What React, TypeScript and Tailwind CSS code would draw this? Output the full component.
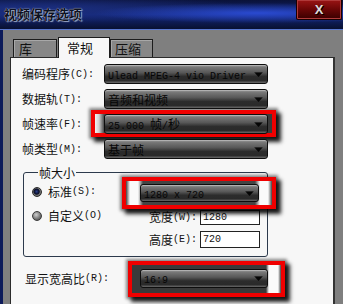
import React from "react";

// splits CJK runs from half-width ASCII runs, like a SimSun bitmap font would render them
function Mixed({ text }: { text: string }) {
  const parts = text.split(/([\x00-\x7F]+)/).filter(Boolean);
  return (
    <>
      {parts.map((p, i) =>
        /^[\x00-\x7F]+$/.test(p) ? (
          <span key={i} className="font-['Liberation_Mono',monospace] text-[10px] whitespace-pre">
            {p}
          </span>
        ) : (
          <span key={i} className="text-[12px]">
            {p}
          </span>
        )
      )}
    </>
  );
}

function Arrow() {
  return (
    <svg width="9" height="5" viewBox="0 0 9 5" className="shrink-0">
      <path d="M0 0h9L4.5 5z" fill="#050505" />
      <path d="M0 0h9" stroke="#777" strokeWidth="0.6" />
    </svg>
  );
}

function Dropdown({ text, className }: { text: string; className: string }) {
  return (
    <div
      className={
        "relative z-[1] flex items-center rounded-[3px] border border-[#0d0d0d] bg-[linear-gradient(180deg,#9c9c9c_0%,#767676_14%,#585858_42%,#2c2c2c_64%,#2a2a2a_86%,#6a6a6a_100%)] shadow-[inset_0_1px_0_#b0b0b0] pl-[3px] pr-[4px] text-[#060606] " +
        className
      }
    >
      <span className="flex-1 min-w-0 whitespace-nowrap overflow-hidden leading-[16px]">
        <Mixed text={text} />
      </span>
      <Arrow />
    </div>
  );
}

function RedBox({ className }: { className: string }) {
  return (
    <div
      className={
        "absolute border-[4px] border-[#f00000] shadow-[0_0_3px_2px_rgba(0,0,0,0.45),4px_4px_4px_1px_rgba(0,0,0,0.85)] " +
        className
      }
    />
  );
}

function Label({ text, className = "" }: { text: string; className?: string }) {
  return (
    <div className={"flex items-center shrink-0 text-[#111] " + className}>
      <Mixed text={text} />
    </div>
  );
}

function Radio({ on }: { on: boolean }) {
  return on ? (
    <span className="w-[10px] h-[10px] rounded-full shrink-0 border border-[#2a2a2a] bg-[radial-gradient(circle_at_45%_45%,#2a3f8a_0,#070b22_42%,#7a7a7a_58%,#3a3a3a_100%)]" />
  ) : (
    <span className="w-[10px] h-[10px] rounded-full shrink-0 border border-[#3a3a3a] bg-[radial-gradient(circle_at_40%_35%,#cfcfcf_0,#7a7a7a_55%,#3a3a3a_100%)]" />
  );
}

function Input({ value, className }: { value: string; className: string }) {
  return (
    <div className={"flex items-center bg-white border border-[#222] pl-[2px] text-[#111] " + className}>
      <Mixed text={value} />
    </div>
  );
}

export default function App() {
  return (
    <div className="w-[343px] h-[304px] overflow-hidden flex flex-col bg-[#0b1540] font-['Noto_Sans_CJK_SC',sans-serif]">
      {/* title bar */}
      <div className="h-[29px] shrink-0 flex items-start bg-[radial-gradient(ellipse_at_75%_45%,#2a4ad0_0%,transparent_45%),radial-gradient(ellipse_at_10%_30%,#1c2f80_0%,transparent_50%),linear-gradient(180deg,#0a1238_0%,#14287a_50%,#081030_100%)]">
        <div className="pl-[4px] pt-[5px] text-[13px] font-bold leading-[18px] text-[#0d1222] [text-shadow:0_0_1px_#e6ecf8,1px_1px_1px_#9aa6c0]">
          视频保存选项
        </div>
        <div className="ml-auto mr-[1px] w-[46px] h-[20px] flex items-center justify-center border border-[#1a0000] border-t-0 rounded-b-[2px] bg-[linear-gradient(180deg,#9a1414_0%,#6a0606_50%,#3a0000_100%)] shadow-[inset_0_0_0_1px_#b03a3a]">
          <span className="font-['Liberation_Sans',sans-serif] font-bold text-[13px] leading-none text-[#dcdcdc] [text-shadow:1px_1px_0_#000]">
            X
          </span>
        </div>
      </div>
      <div className="h-px shrink-0 bg-[#5a78d0]" />

      {/* body */}
      <div className="flex-1 flex">
        <div className="w-[3px] bg-[#0c1a5a]" />
        <div className="flex-1 flex flex-col bg-[#7f7f7f]">
          {/* tabs */}
          <div className="h-[27px] shrink-0 flex items-end pl-[10px]">
            <div className="w-[44px] h-[18px] flex items-center pl-[5px] bg-[#878787] border border-b-0 border-[#1c1c1c] shadow-[inset_1px_1px_0_#a8a8a8] text-[13px] text-[#111]">
              库
            </div>
            <div className="relative z-[2] ml-px w-[52px] h-[21px] -mb-px flex items-center pl-[8px] bg-[#f7f7f7] border border-b-0 border-[#1c1c1c] text-[13px] text-[#111]">
              常规
            </div>
            <div className="w-[43px] h-[18px] flex items-center pl-[4px] bg-[#878787] border border-b-0 border-[#1c1c1c] shadow-[inset_1px_1px_0_#a8a8a8] text-[13px] text-[#111]">
              压缩
            </div>
          </div>

          {/* panel */}
          <div className="ml-[7px] w-[325px] flex-1 bg-[#f7f7f7] border border-b-0 border-[#2b2b2b] border-r-[2px] border-r-[#333] pl-[11px] pt-[6px] flex flex-col">
            <div className="flex flex-col gap-[5px]">
              <div className="flex h-[20px]">
                <Label text="编码程序(C):" className="w-[82px]" />
                <Dropdown text="Ulead MPEG-4 vio Driver" className="w-[164px] h-[20px]" />
              </div>
              <div className="flex h-[20px]">
                <Label text="数据轨(T):" className="w-[82px]" />
                <Dropdown text="音频和视频" className="w-[164px] h-[20px]" />
              </div>
              <div className="flex h-[20px]">
                <Label text="帧速率(F):" className="w-[82px]" />
                <div className="relative">
                  <RedBox className="-left-[13px] -right-[8px] -top-[4px] -bottom-[3px] bg-[linear-gradient(90deg,#f2f2f2_0px,#cfcfcf_4px,#4a4a4a_9px,#3a3a3a_100%)]" />
                  <Dropdown text="25.000 帧/秒" className="w-[164px] h-[20px]" />
                </div>
              </div>
              <div className="flex h-[20px]">
                <Label text="帧类型(M):" className="w-[82px]" />
                <Dropdown text="基于帧" className="w-[164px] h-[20px]" />
              </div>
            </div>

            {/* frame size group */}
            <fieldset className="mt-[5px] ml-px w-[245px] border border-[#2c3a4c] rounded-[3px] pt-[4px] pb-[8px] pl-[8px]">
              <legend className="ml-[6px] px-[1px] leading-[14px] text-[#111]">
                <Mixed text="帧大小" />
              </legend>
              <div className="flex items-center h-[18px]">
                <div className="w-[108px] flex items-center gap-[6px] -mt-[3px]">
                  <Radio on />
                  <Label text="标准(S):" />
                </div>
                <div className="relative">
                  <RedBox className="-left-[18px] -right-[17px] -top-[7px] -bottom-[7px] bg-[linear-gradient(90deg,#444_0px,#fafafa_4px,#fafafa_12px,#444_17px,#444_calc(100%-17px),#fafafa_calc(100%-12px),#fafafa_calc(100%-4px),#444_100%)]" />
                  <Dropdown text="1280 x 720" className="w-[119px] h-[18px]" />
                </div>
              </div>
              <div className="flex items-center h-[16px] mt-[7px]">
                <div className="w-[117px] flex items-center gap-[6px] -mt-[3px]">
                  <Radio on={false} />
                  <Label text="自定义(O)" />
                </div>
                <Label text="宽度(W):" className="w-[51px]" />
                <Input value="1280" className="w-[60px] h-[15px]" />
              </div>
              <div className="flex items-center h-[17px] mt-[6px]">
                <div className="w-[117px]" />
                <Label text="高度(E):" className="w-[51px]" />
                <Input value="720" className="w-[60px] h-[17px]" />
              </div>
            </fieldset>

            <div className="flex h-[19px] mt-[12px] ml-[3px]">
              <Label text="显示宽高比(R):" className="w-[115px]" />
              <div className="relative">
                <RedBox className="-left-[12px] -right-[17px] -top-[8px] -bottom-[9px] bg-[linear-gradient(90deg,#3a3a3a_0px,#3a3a3a_calc(100%-15px),#fafafa_calc(100%-12px),#fafafa_calc(100%-3px),#444_100%)]" />
                <Dropdown text="16:9" className="w-[128px] h-[19px]" />
              </div>
            </div>
          </div>
        </div>
      </div>
    </div>
  );
}
